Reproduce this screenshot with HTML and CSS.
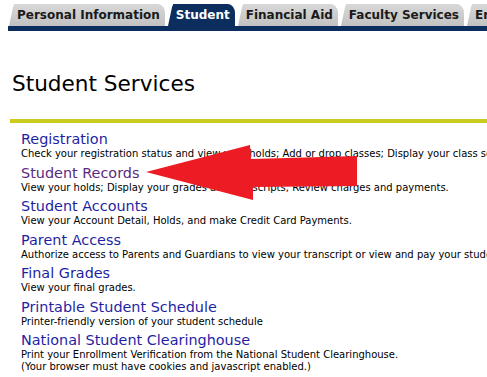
FILE: index.html
```html
<!DOCTYPE html>
<html lang="en">
<head>
    <meta charset="UTF-8">
    <title>Student Services</title>
    <link rel="stylesheet" href="styles.css">
</head>
<body>
    <nav class="tabs">
        <a class="tab" href="#">Personal Information</a>
        <a class="tab active" href="#">Student</a>
        <a class="tab" href="#">Financial Aid</a>
        <a class="tab" href="#">Faculty Services</a>
        <a class="tab" href="#">Employee</a>
    </nav>

    <h1 class="page-title">Student Services</h1>
    <div class="rule"></div>

    <ul class="menu">
        <li>
            <a href="#">Registration</a>
            <p>Check your registration status and view your holds; Add or drop classes; Display your class schedule.</p>
        </li>
        <li>
            <a class="visited" href="#">Student Records</a>
            <p>View your holds; Display your grades and transcripts; Review charges and payments.</p>
        </li>
        <li>
            <a href="#">Student Accounts</a>
            <p>View your Account Detail, Holds, and make Credit Card Payments.</p>
        </li>
        <li>
            <a href="#">Parent Access</a>
            <p>Authorize access to Parents and Guardians to view your transcript or view and pay your student account.</p>
        </li>
        <li>
            <a href="#">Final Grades</a>
            <p>View your final grades.</p>
        </li>
        <li>
            <a href="#">Printable Student Schedule</a>
            <p>Printer-friendly version of your student schedule</p>
        </li>
        <li>
            <a href="#">National Student Clearinghouse</a>
            <p>Print your Enrollment Verification from the National Student Clearinghouse.<br>(Your browser must have cookies and javascript enabled.)</p>
        </li>
    </ul>

    <!-- red arrow pasted over the screenshot -->
    <svg class="arrow" width="487" height="377" viewBox="0 0 487 377">
        <polygon points="146,172 250,145 251,159 357,156 357,186 253,187 253,200" fill="#ed1c24"/>
    </svg>
</body>
</html>
```

FILE: styles.css
```css
body {
    margin: 0;
    font-family: 'DejaVu Sans', Verdana, sans-serif;
    background: #fff;
    color: #000;
    overflow: hidden;
    white-space: nowrap;
}

.tabs {
    display: flex;
    gap: 3px;
    margin-left: 8px;
    padding: 4px 0 0 1px;
    border-bottom: 5px solid #0c2e5e;
}

.tab {
    position: relative;
    z-index: 0;
    display: block;
    height: 22px;
    line-height: 23px;
    padding: 0 5px 0 3px;
    margin-left: 5px;
    font-size: 12px;
    font-weight: bold;
    color: #1a1a1a;
    text-decoration: none;
    background: linear-gradient(#d8d8d8, #c2c2c2);
    border-top-right-radius: 7px 9px;
}

.tab::before {
    content: '';
    position: absolute;
    z-index: -1;
    left: -5px;
    top: 0;
    bottom: 0;
    width: 10px;
    background: inherit;
    border-top-left-radius: 3px;
    transform: skewX(-12deg);
    transform-origin: bottom left;
}

.tab.active {
    background: #0c2e5e;
    color: #fff;
}

.page-title {
    margin: 39px 0 0 12px;
    font-size: 21.6px;
    font-weight: normal;
    line-height: 28px;
}

.rule {
    height: 4px;
    margin: 21px 0 0 10px;
    background: #c9cc1c;
}

.menu {
    list-style: none;
    margin: 7px 0 0;
    padding: 0 0 0 21px;
}

.menu li {
    margin-bottom: 3.5px;
}

.menu a {
    display: block;
    font-size: 14.4px;
    line-height: 18px;
    color: #1f1fa3;
    text-decoration: none;
}

.menu a.visited {
    color: #5a2a80;
}

.menu p {
    margin: 0;
    font-size: 10px;
    line-height: 12px;
}

.arrow {
    position: absolute;
    top: 0;
    left: 0;
}
```
